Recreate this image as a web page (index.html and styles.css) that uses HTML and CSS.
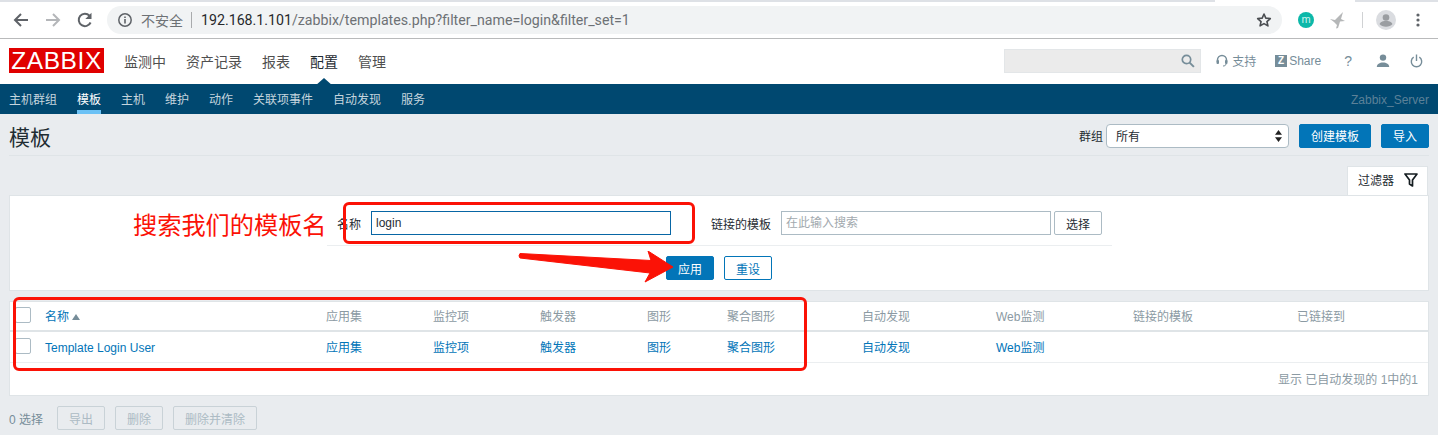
FILE: index.html
```html
<!DOCTYPE html>
<html lang="zh">
<head>
<meta charset="utf-8">
<title>模板</title>
<link rel="stylesheet" href="styles.css">
</head>
<body>
<div class="tabstrip"><div class="tab-l"></div><div class="tab-r"></div></div>
<div class="chrome">
  <svg class="cicon" width="18" height="18" viewBox="0 0 18 18"><path d="M16 9H3M9 3L3 9l6 6" fill="none" stroke="#5f6368" stroke-width="2"/></svg>
  <svg class="cicon" width="18" height="18" viewBox="0 0 18 18"><path d="M2 9h13M9 3l6 6-6 6" fill="none" stroke="#b4b6b9" stroke-width="2"/></svg>
  <svg class="cicon" width="18" height="18" viewBox="0 0 18 18"><path d="M14.6 11.5A6.2 6.2 0 1 1 13.5 4.7" fill="none" stroke="#5f6368" stroke-width="2"/><path d="M15.5 1.8V8H9.3z" fill="#5f6368"/></svg>
  <div class="omni">
    <svg width="16" height="16" viewBox="0 0 16 16"><circle cx="8" cy="8" r="6.2" fill="none" stroke="#5f6368" stroke-width="1.5"/><path d="M8 7v4.4M8 4.4v1.5" stroke="#5f6368" stroke-width="1.6"/></svg>
    <span class="insecure">不安全</span><span class="omni-sep"></span>
    <span class="url"><b>192.168.1.101</b>/zabbix/templates.php?filter_name=login&amp;filter_set=1</span>
    <svg class="star" width="16" height="16" viewBox="0 0 24 24"><path d="M12 3l2.7 6.2 6.8.6-5.1 4.5 1.5 6.6L12 17.4 6.100 20.900l1.500-6.600L2.500 9.800l6.800-.6z" fill="none" stroke="#4a4d51" stroke-width="2.400" stroke-linejoin="round"/></svg>
  </div>
  <div class="ext">
    <span class="ext-m">m</span>
    <svg width="18" height="18" viewBox="0 0 18 18"><path d="M1 8l5 1 8-8-2 7 4 2-5 .5-1 3.500-1 3-2 .5 1-3.500L5 11z" fill="#b5b7b8"/></svg>
    <span class="ext-sep"></span>
    <svg width="20" height="20" viewBox="0 0 20 20"><circle cx="10" cy="10" r="10" fill="#dadce0"/><circle cx="10" cy="7.500" r="3.300" fill="#9a9da1"/><path d="M3.500 14c1-2.500 4-3.300 6.500-3.300s5.500.8 6.500 3.300c-1.500 1.800-3.800 2.800-6.500 2.800s-5-1-6.500-2.800z" fill="#9a9da1"/></svg>
    <svg class="dots" width="4" height="14" viewBox="0 0 4 14"><circle cx="2" cy="2" r="1.600" fill="#5f6368"/><circle cx="2" cy="7" r="1.600" fill="#5f6368"/><circle cx="2" cy="12" r="1.600" fill="#5f6368"/></svg>
  </div>
</div>

<header class="top">
  <div class="logo">ZABBIX</div>
  <nav class="mainnav">
    <a>监测中</a><a>资产记录</a><a>报表</a><a class="active">配置</a><a>管理</a>
  </nav>
  <div class="tools">
    <div class="gsearch"><svg width="14" height="14" viewBox="0 0 14 14"><circle cx="5.500" cy="5.500" r="4.200" fill="none" stroke="#768d99" stroke-width="1.700"/><path d="M8.600 8.600l4.300 4.300" stroke="#768d99" stroke-width="2"/></svg></div>
    <a class="tool t-support"><svg width="12" height="13" viewBox="0 0 12 13"><path d="M1.500 8V6a4.500 4.500 0 0 1 9 0v2" fill="none" stroke="#768d99" stroke-width="1.500"/><rect x="0.500" y="6" width="2.500" height="4" rx="1" fill="#768d99"/><rect x="9" y="6" width="2.500" height="4" rx="1" fill="#768d99"/><path d="M10 10c0 1.500-1.500 2-3 2" fill="none" stroke="#768d99"/></svg><span>支持</span></a>
    <a class="tool t-share"><span class="zicon">Z</span><span>Share</span></a>
    <a class="tool t-help">?</a>
    <a class="tool t-user"><svg width="14" height="14" viewBox="0 0 14 14"><circle cx="7" cy="3.600" r="3.200" fill="#768d99"/><path d="M0.800 13c0-3 2.800-4.600 6.200-4.600s6.200 1.600 6.200 4.600z" fill="#768d99"/></svg></a>
    <a class="tool t-power"><svg width="13" height="14" viewBox="0 0 13 14"><path d="M3.700 3.200a5.200 5.200 0 1 0 5.600 0M6.500 0.500v6.500" fill="none" stroke="#768d99" stroke-width="1.400"/></svg></a>
  </div>
</header>
<nav class="subnav">
  <a>主机群组</a><a class="active">模板</a><a>主机</a><a>维护</a><a>动作</a><a>关联项事件</a><a>自动发现</a><a>服务</a>
  <span class="server">Zabbix_Server</span>
</nav>

<main class="page">
  <div class="titlebar">
    <h1>模板</h1>
    <div class="controls">
      <label>群组</label>
      <div class="select"><span>所有</span><svg width="7" height="12" viewBox="0 0 7 12"><path d="M3.500 0L7 4.800H0zM3.500 12L0 7.200h7z" fill="#222"/></svg></div>
      <button class="btn create">创建模板</button>
      <button class="btn import">导入</button>
    </div>
  </div>
  <div class="tabrow">
    <div class="filtertab"><span>过滤器</span><svg width="14" height="14" viewBox="0 0 14 14"><path d="M1 1h12L8.500 7v6l-3-2V7z" fill="none" stroke="#141c20" stroke-width="1.700" stroke-linejoin="round"/></svg></div>
  </div>
  <section class="filter">
    <div class="frow">
      <label class="lab1">名称</label>
      <div class="input name">login</div>
      <label class="lab2">链接的模板</label>
      <div class="input tmpl">在此输入搜索</div>
      <button class="btn-sel">选择</button>
    </div>
    <div class="factions">
      <button class="btn apply">应用</button>
      <button class="btn reset">重设</button>
    </div>
  </section>
  <section class="list">
    <div class="row head">
      <span class="check"></span>
      <span class="sorted">名称 <i class="asc"></i></span>
      <span>应用集</span><span>监控项</span><span>触发器</span><span>图形</span><span>聚合图形</span><span>自动发现</span><span>Web监测</span><span>链接的模板</span><span>已链接到</span>
    </div>
    <div class="row body">
      <span class="check"></span>
      <a>Template Login User</a>
      <a>应用集</a><a>监控项</a><a>触发器</a><a>图形</a><a>聚合图形</a><a>自动发现</a><a>Web监测</a><span></span><span></span>
    </div>
    <div class="foot">显示 已自动发现的 1中的1</div>
  </section>
  <div class="bulk">
    <span class="count">0 选择</span>
    <button class="btn off">导出</button>
    <button class="btn off">删除</button>
    <button class="btn off">删除并清除</button>
  </div>
</main>

<div class="note">搜索我们的模板名</div>
<div class="ring ring-a"></div>
<div class="ring ring-b"></div>
<svg class="arrow" width="160" height="40" viewBox="0 0 160 40"><path d="M2 2.500 L 133 9.500 L 130 0 L 155 16 L 127 31 L 132 22 L 2 7 Q0 5 2 2.500 Z" fill="#fb1206" stroke="#fb1206" stroke-linejoin="round"/></svg>
</body>
</html>
```
FILE: styles.css
```css
* { box-sizing: border-box; }
html, body { margin: 0; padding: 0; }
body {
  width: 1438px; height: 435px; overflow: hidden; position: relative;
  background: #e9ecef; color: #1f2c33;
  font: 12px "Liberation Sans", "Noto Sans CJK SC", sans-serif;
}
a { display: block; }
button { font: inherit; margin: 0; padding: 0; }

.tabstrip { height: 2px; display: flex; justify-content: space-between; background: #fff; }
.tab-l { width: 1215px; background: #dee1e6; }
.tab-r { width: 83px; background: #dee1e6; }
.chrome {
  height: 37px; background: #fff; border-bottom: 1px solid #b9babb;
  display: flex; align-items: center; padding: 0 0 1px 12px;
}
.cicon { margin-right: 14px; flex: none; }
.omni {
  width: 1175px; height: 28px; border-radius: 14px; background: #f1f3f4; margin-left: -1px;
  display: flex; align-items: center; padding: 0 10px;
  font: 14.200px Roboto, "Noto Sans CJK SC", sans-serif; color: #6d7175;
}
.insecure { margin-left: 8px; font-size: 14px; }
.omni-sep { width: 1px; height: 16px; background: #a9abad; margin: 0 9px 0 8px; }
.url b { font-weight: 400; color: #26282b; }
.star { margin-left: auto; }
.ext { display: flex; align-items: center; margin-left: 16px; flex: 1; }
.ext-m {
  width: 16px; height: 16px; border-radius: 50%; background: #0cb8a9; color: #cdf3ee;
  font-size: 11px; line-height: 15px; text-align: center;
}
.ext > svg:nth-of-type(1) { margin-left: 15px; }
.ext-sep { width: 1px; height: 16px; background: #d0d2d4; margin: 0 13px 0 15px; }
.dots { margin-left: 20px; }

.top { height: 45px; background: #fff; display: flex; align-items: center; padding: 0 0 2px 9px; }
.logo {
  width: 95px; height: 25px; background: #e00000; color: #fff;
  font-size: 24.500px; line-height: 25px; text-align: center; letter-spacing: .6px;
}
.mainnav { display: flex; gap: 20px; margin-left: 20px; font-size: 14px; color: #4f4f4f; }
.mainnav a { position: relative; }
.mainnav a.active { color: #1f2c33; }
.mainnav a.active::after {
  content: ""; position: absolute; left: 5px; bottom: -15px;
  border: 9px solid transparent; border-top: 0; border-bottom: 8px solid #004870;
}
.tools { margin-left: auto; display: flex; align-items: center; color: #768d99; }
.gsearch {
  width: 197px; height: 24px; background: #ebebeb; border: 1px solid #e3e6e8;
  display: flex; align-items: center; justify-content: flex-end; padding-right: 5px;
}
.tool { display: flex; align-items: center; }
.t-support { margin-left: 15px; gap: 4px; }
.t-share { margin-left: 19px; gap: 2px; }
.zicon {
  width: 12px; height: 12px; background: #768d99; color: #fff;
  font: bold 10px/12px "Liberation Sans", sans-serif; text-align: center;
}
.t-help { margin-left: 23px; font-size: 14px; }
.t-user { margin-left: 24px; }
.t-power { margin-left: 20px; margin-right: 15px; }

.subnav {
  height: 30px; background: #004870; display: flex; align-items: stretch; padding: 0 9px;
  gap: 20px; color: #c5d5de; line-height: 32px;
}
.subnav a { height: 30px; }
.subnav a.active { color: #fff; box-shadow: inset 0 -4px 0 #6bc1f5; }
.server { margin-left: auto; color: #5c8198; }

.page { padding: 0 9px; }
.titlebar {
  height: 42px; display: flex; align-items: center; justify-content: space-between;
  border-bottom: 1px solid #dfe4e7; padding-top: 2px;
}
h1 { margin: 0; font-size: 21px; font-weight: 400; color: #1f2c33; }
.controls { display: flex; align-items: center; color: #1f2c33; }
.controls label { margin-right: 3px; }
.select {
  width: 183px; height: 24px; background: #fff; border: 1px solid #acbbc4; border-radius: 4px;
  display: flex; align-items: center; justify-content: space-between; padding: 0 6px 0 9px; margin-right: 10px;
}
.btn { height: 24px; border: 1px solid #0275b8; background: #0275b8; color: #fff; border-radius: 2px; display: block; }
.create { width: 72px; margin-right: 10px; }
.import { width: 48px; }

.tabrow { display: flex; justify-content: flex-end; padding: 10px 1px 0 0; height: 39px; }
.filtertab {
  width: 81px; height: 29px; background: #fff; border: 1px solid #dfe4e7; border-bottom: 0;
  display: flex; align-items: center; gap: 10px; padding: 0 0 3px 10px;
}
.filter { height: 96px; background: #fff; border: 1px solid #dfe4e7; width: 1420px; }
.frow {
  width: 785px; height: 50px; margin-left: 317px; border-bottom: 1px solid #ebeef0;
  display: flex; align-items: center; padding-top: 5px;
}
.lab1 { margin-left: 10px; }
.input { height: 24px; border: 1px solid #acbbc4; padding-left: 4px; line-height: 22px; }
.input.name { width: 300px; margin-left: 10px; border-color: #0866a5; color: #1f2c33; }
.lab2 { margin-left: 40px; }
.input.tmpl { width: 270px; margin-left: 10px; color: #a2a9ae; }
.btn-sel { width: 48px; height: 24px; margin-left: 3px; background: #fff; border: 1px solid #acbbc4; border-radius: 2px; color: #1f2c33; }
.factions { display: flex; gap: 10px; margin-left: 656px; padding-top: 10px; }
.apply { width: 48px; }
.reset { width: 48px; background: #fff; color: #0275b8; }

.list { margin-top: 10px; width: 1420px; height: 95px; background: #fff; border: 1px solid #dfe4e7; }
.row {
  display: grid; align-items: center; padding-left: 5px; padding-top: 2px; line-height: 14px;
  grid-template-columns: 30px 281px 107px 107px 107px 80px 135px 134px 137px 164px 1fr;
}
.head { height: 30px; color: #8b9aa3; border-bottom: 2px solid #dfe4e7; }
.body { height: 31px; color: #0275b8; border-bottom: 1px solid #ebeef0; }
.check { width: 16px; height: 16px; margin-bottom: 4px; border: 1px solid #acbbc4; border-radius: 2px; background: #fff; }
.head .sorted { color: #0275b8; display: flex; align-items: center; gap: 3px; }
.asc { width: 0; height: 0; border: 4px solid transparent; border-top: 0; border-bottom: 6px solid #768d99; }
.foot { text-align: right; padding: 7px 10px 0 0; color: #8b9aa3; }
.bulk { display: flex; align-items: center; margin-top: 10px; gap: 10px; }
.count { color: #768d99; width: 38px; }
.btn.off { background: #e9ecef; border-color: #c9d2d7; color: #acbbc4; width: 48px; }
.btn.off:last-child { width: 84px; }

.note { position: absolute; left: 133px; top: 207px; font-size: 24.200px; line-height: 34px; color: #fb1206; white-space: nowrap; font-family: "Noto Sans CJK SC", sans-serif; }
.ring { position: absolute; border: 3px solid #fb1206; border-radius: 6px; }
.ring-a { left: 343px; top: 202px; width: 352px; height: 42px; }
.ring-b { left: 13px; top: 297px; width: 794px; height: 74px; }
.arrow { position: absolute; left: 518px; top: 251px; }
```
